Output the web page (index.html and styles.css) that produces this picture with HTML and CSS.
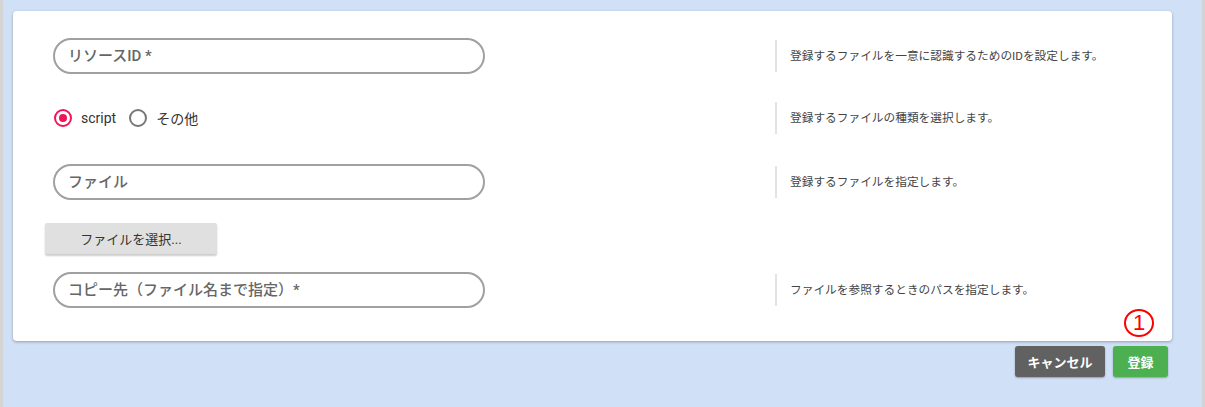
FILE: index.html
```html
<!DOCTYPE html>
<html lang="ja">
<head>
  <meta charset="UTF-8">
  <title>リソース登録</title>
  <link rel="stylesheet" href="styles.css">
</head>
<body>
  <div class="page">
    <div class="card">
      <div class="row row-id">
        <div class="field">
          <div class="pill-input">リソースID *</div>
        </div>
        <div class="help">登録するファイルを一意に認識するためのIDを設定します。</div>
      </div>
      <div class="row row-type">
        <div class="field radios">
          <label class="radio checked"><span class="dot"></span>script</label>
          <label class="radio"><span class="dot"></span>その他</label>
        </div>
        <div class="help">登録するファイルの種類を選択します。</div>
      </div>
      <div class="row row-file">
        <div class="field">
          <div class="pill-input">ファイル</div>
        </div>
        <div class="help">登録するファイルを指定します。</div>
      </div>
      <div class="row-button">
        <button class="file-btn">ファイルを選択...</button>
      </div>
      <div class="row row-path">
        <div class="field">
          <div class="pill-input">コピー先（ファイル名まで指定）*</div>
        </div>
        <div class="help">ファイルを参照するときのパスを指定します。</div>
      </div>
      <span class="mark">1</span>
    </div>
    <div class="actions">
      <button class="btn btn-cancel">キャンセル</button>
      <button class="btn btn-ok">登録</button>
    </div>
  </div>
</body>
</html>
```

FILE: styles.css
```css
html,body{
  margin : 0;
  height : 100%;
}
body{
  font-family : Roboto, "Noto Sans CJK JP", sans-serif;
  background : #d0e0f6;
}
.page{
  height : 407px;
  box-sizing : border-box;
  border-left : 3px solid #d4d4d4;
  border-right : 3px solid #d4d4d4;
  padding : 11px 0 0 10px;
  width : 1205px;
}
.card{
  position : relative;
  width : 1159px;
  box-sizing : border-box;
  background : #fff;
  border-radius : 4px;
  box-shadow : 0 1px 3px rgba(0,0,0,.3);
  padding : 27px 0 33px 0;
}
.row{
  display : flex;
  align-items : center;
  height : 36px;
}
.row-type{ margin-top : 26px }
.row-file{ margin-top : 28px }
.row-path{ margin-top : 18px }
.row-button{
  margin-top : 23px;
  padding-left : 32px;
  height : 31px;
}
.field{
  width : 762px;
  padding-left : 40px;
  box-sizing : border-box;
}
.pill-input{
  width : 432px;
  height : 36px;
  box-sizing : border-box;
  border : 2px solid #a0a0a0;
  border-radius : 18px;
  padding-left : 13px;
  line-height : 32px;
  font-size : 15px;
  font-weight : 500;
  color : #666;
}

/* ラジオボタン */
.radios{
  display : flex;
  align-items : center;
  padding-left : 41px;
}
.radio{
  display : flex;
  align-items : center;
  font-size : 14px;
  color : #333;
  margin-right : 13px;
}
.radio .dot{
  width : 18px;
  height : 18px;
  box-sizing : border-box;
  border : 2px solid #777;
  border-radius : 50%;
  margin-right : 9px;
  position : relative;
}
.radio.checked .dot{
  border-color : #f0145a;
}
.radio.checked .dot::after{
  content : "";
  position : absolute;
  left : 3px;
  top : 3px;
  width : 8px;
  height : 8px;
  border-radius : 50%;
  background : #f0145a;
}

.help{
  border-left : 2px solid #e2e2e2;
  padding-left : 13px;
  height : 32px;
  line-height : 32px;
  font-size : 11.7px;
  color : #444;
}

.file-btn{
  width : 172px;
  height : 31px;
  border : none;
  border-radius : 2px;
  background : #e0e0e0;
  box-shadow : 0 2px 2px rgba(0,0,0,.2);
  font-family : inherit;
  font-size : 13px;
  color : #333;
}

/* 注釈の丸数字 */
.mark{
  position : absolute;
  left : 1111px;
  top : 298px;
  width : 30px;
  height : 28px;
  box-sizing : border-box;
  border : 2.5px solid #f00;
  border-radius : 50%;
  text-align : center;
  line-height : 23px;
  font-family : "Liberation Sans", sans-serif;
  font-size : 22px;
  color : #f00;
}

.actions{
  width : 1155px;
  display : flex;
  justify-content : flex-end;
  gap : 8px;
  margin-top : 5px;
}
.btn{
  height : 31px;
  border : none;
  border-radius : 3px;
  box-shadow : 0 1px 2px rgba(0,0,0,.3);
  font-family : inherit;
  font-size : 13px;
  font-weight : bold;
  color : #fff;
}
.btn-cancel{
  width : 90px;
  background : #616161;
}
.btn-ok{
  width : 55px;
  background : #4caf50;
}
```
